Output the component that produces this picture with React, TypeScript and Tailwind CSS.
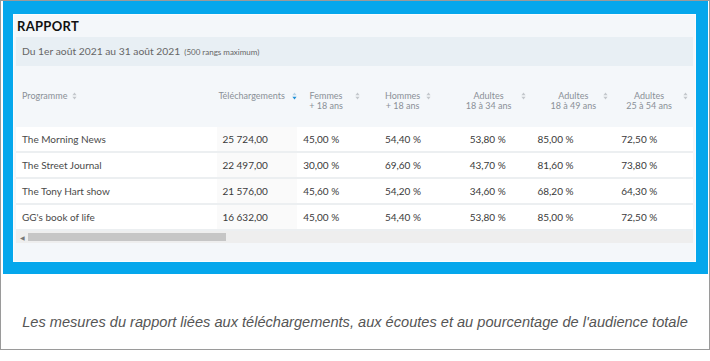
import React from "react";

const colW = ["w-[202px]", "w-[80px]", "w-[82px]", "w-[85px]", "w-[68px]", "w-[84px]", "w-[78px]"];

const rows = [
  ["The Morning News", "25 724,00", "45,00 %", "54,40 %", "53,80 %", "85,00 %", "72,50 %"],
  ["The Street Journal", "22 497,00", "30,00 %", "69,60 %", "43,70 %", "81,60 %", "73,80 %"],
  ["The Tony Hart show", "21 576,00", "45,60 %", "54,20 %", "34,60 %", "68,20 %", "64,30 %"],
  ["GG's book of life", "16 632,00", "45,00 %", "54,40 %", "53,80 %", "85,00 %", "72,50 %"],
];

const headers = [
  { l1: "Programme", pl: "pl-[6px]", gap: "ml-[5px]" },
  { l1: "Téléchargements", pl: "pl-[1px]", gap: "ml-[7px]", active: true },
  { l1: "Femmes", l2: "+ 18 ans", pl: "pl-[12px]", gap: "ml-[12px]" },
  { l1: "Hommes", l2: "+ 18 ans", pl: "pl-[6px]", gap: "ml-[6px]" },
  { l1: "Adultes", l2: "18 à 34 ans", pl: "pl-[2px]", gap: "ml-[10px]" },
  { l1: "Adultes", l2: "18 à 49 ans", pl: "pl-[19px]", gap: "ml-[7px]" },
  { l1: "Adultes", l2: "25 à 54 ans", pl: "pl-[11px]", gap: "ml-[11px]" },
];

function SortIcon({ active = false }: { active?: boolean }) {
  return (
    <svg width="5" height="8" viewBox="0 0 5 8" className="shrink-0">
      <path d="M2.5 0.5 L4.6 3.2 L0.4 3.2 Z" fill={active ? "#b9d3e6" : "#c3c7cc"} />
      <path d="M2.5 7.5 L4.6 4.8 L0.4 4.8 Z" fill={active ? "#1d8fd8" : "#c3c7cc"} />
    </svg>
  );
}

export default function App() {
  return (
    <div className="w-[710px] h-[361px] bg-white font-['Lato','Noto_Sans',sans-serif]">
      <div className="h-[350px] border border-[#9a9a9a] flex flex-col">
        <div className="ml-[2px] mr-[1px] bg-[#05a7ec] pl-[10px] pr-[12px] pt-[13px] pb-[12px]">
          <div className="h-[248px] bg-[#f4f7fa] border border-[#fbfcfd] px-[2px] flex flex-col">
            <div className="h-[22px] pt-[3px] pl-[1px] text-[13px] font-bold text-[#111] leading-[17px] tracking-[0.3px]">
              RAPPORT
            </div>
            <div className="h-[29px] bg-[#e8eff4] flex items-center pl-[6px] text-[10.3px] text-[#666]">
              <span>Du 1er août 2021 au 31 août 2021</span>
              <span className="text-[8px] ml-[4px] mt-[1px]">(500 rangs maximum)</span>
            </div>
            <div className="h-[61px] pt-[25px] flex text-[9px] text-[#8a9097]">
              {headers.map((h, i) => (
                <div key={i} className={colW[i]}>
                  <div className={"flex items-start " + h.pl}>
                    <div className="flex flex-col items-center leading-[10px]">
                      <span>{h.l1}</span>
                      {h.l2 && <span>{h.l2}</span>}
                    </div>
                    <div className={"pt-[1px] " + h.gap}>
                      <SortIcon active={h.active} />
                    </div>
                  </div>
                </div>
              ))}
            </div>
            <div className="flex flex-col gap-[2px] bg-[#eceff1] pb-[2px]">
              {rows.map((r, i) => (
                <div key={i} className="flex h-[24px] items-center bg-white text-[10px] text-[#3a3a3a]">
                  {r.map((c, j) => (
                    <div
                      key={j}
                      className={
                        "h-full flex items-center " +
                        colW[j] +
                        " " +
                        (j === 0 ? "pl-[6px] text-[#4a4a4a]" : j === 1 ? "pl-[5px] bg-[#fafafa]" : "pl-[6px]")
                      }
                    >
                      {c}
                    </div>
                  ))}
                </div>
              ))}
            </div>
            <div className="h-[12px] bg-[#eeeeee] flex items-center">
              <span className="w-[12px] flex justify-center text-[6px] text-[#777]">◀</span>
              <div className="w-[198px] h-[8px] bg-[#c6c6c6]"></div>
            </div>
          </div>
        </div>
        <div className="flex-1 flex items-center justify-center pt-[22px]">
          <span className="italic text-[14.6px] text-[#555] font-['Liberation_Sans',Arial,sans-serif]">
            Les mesures du rapport liées aux téléchargements, aux écoutes et au pourcentage de l'audience totale
          </span>
        </div>
      </div>
    </div>
  );
}
